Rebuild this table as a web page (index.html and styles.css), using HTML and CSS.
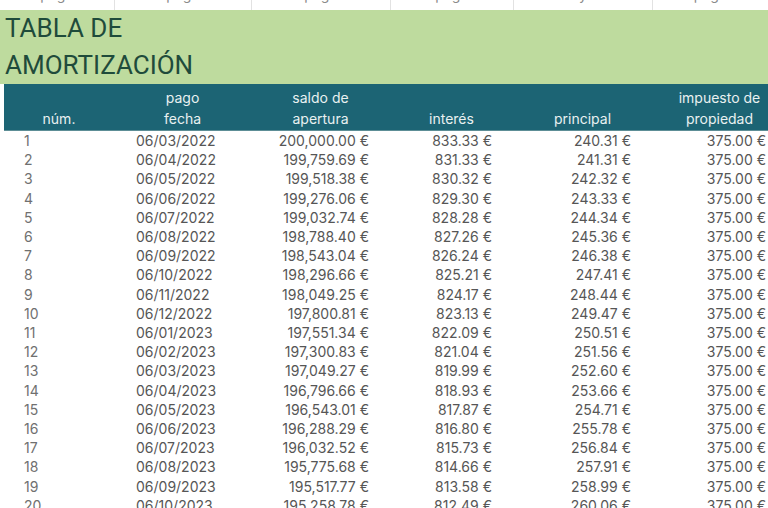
FILE: index.html
```html
<!DOCTYPE html>
<html lang="es">
<head>
<meta charset="utf-8">
<title>Tabla de amortización</title>
<link rel="stylesheet" href="styles.css">
</head>
<body>
<div class="sheet">
  <div class="strip">
    <div class="scell c1"><span>pago</span></div>
    <div class="scell c2"><span>pago</span></div>
    <div class="scell c3"><span>pago</span></div>
    <div class="scell c4"><span>pago</span></div>
    <div class="scell c5"><span>y</span></div>
    <div class="scell c6"><span>pago</span></div>
  </div>
  <div class="title">TABLA DE<br>AMORTIZACIÓN</div>
  <table class="amort">
    <colgroup>
      <col class="w1"><col class="w2"><col class="w3"><col class="w4"><col class="w5"><col class="w6">
    </colgroup>
    <thead>
      <tr>
        <th>núm.</th>
        <th>pago<br>fecha</th>
        <th>saldo de<br>apertura</th>
        <th>interés</th>
        <th>principal</th>
        <th>impuesto de<br>propiedad</th>
      </tr>
    </thead>
    <tbody>
      <tr><td>1</td><td>06/03/2022</td><td>200,000.00 €</td><td>833.33 €</td><td>240.31 €</td><td>375.00 €</td></tr>
      <tr><td>2</td><td>06/04/2022</td><td>199,759.69 €</td><td>831.33 €</td><td>241.31 €</td><td>375.00 €</td></tr>
      <tr><td>3</td><td>06/05/2022</td><td>199,518.38 €</td><td>830.32 €</td><td>242.32 €</td><td>375.00 €</td></tr>
      <tr><td>4</td><td>06/06/2022</td><td>199,276.06 €</td><td>829.30 €</td><td>243.33 €</td><td>375.00 €</td></tr>
      <tr><td>5</td><td>06/07/2022</td><td>199,032.74 €</td><td>828.28 €</td><td>244.34 €</td><td>375.00 €</td></tr>
      <tr><td>6</td><td>06/08/2022</td><td>198,788.40 €</td><td>827.26 €</td><td>245.36 €</td><td>375.00 €</td></tr>
      <tr><td>7</td><td>06/09/2022</td><td>198,543.04 €</td><td>826.24 €</td><td>246.38 €</td><td>375.00 €</td></tr>
      <tr><td>8</td><td>06/10/2022</td><td>198,296.66 €</td><td>825.21 €</td><td>247.41 €</td><td>375.00 €</td></tr>
      <tr><td>9</td><td>06/11/2022</td><td>198,049.25 €</td><td>824.17 €</td><td>248.44 €</td><td>375.00 €</td></tr>
      <tr><td>10</td><td>06/12/2022</td><td>197,800.81 €</td><td>823.13 €</td><td>249.47 €</td><td>375.00 €</td></tr>
      <tr><td>11</td><td>06/01/2023</td><td>197,551.34 €</td><td>822.09 €</td><td>250.51 €</td><td>375.00 €</td></tr>
      <tr><td>12</td><td>06/02/2023</td><td>197,300.83 €</td><td>821.04 €</td><td>251.56 €</td><td>375.00 €</td></tr>
      <tr><td>13</td><td>06/03/2023</td><td>197,049.27 €</td><td>819.99 €</td><td>252.60 €</td><td>375.00 €</td></tr>
      <tr><td>14</td><td>06/04/2023</td><td>196,796.66 €</td><td>818.93 €</td><td>253.66 €</td><td>375.00 €</td></tr>
      <tr><td>15</td><td>06/05/2023</td><td>196,543.01 €</td><td>817.87 €</td><td>254.71 €</td><td>375.00 €</td></tr>
      <tr><td>16</td><td>06/06/2023</td><td>196,288.29 €</td><td>816.80 €</td><td>255.78 €</td><td>375.00 €</td></tr>
      <tr><td>17</td><td>06/07/2023</td><td>196,032.52 €</td><td>815.73 €</td><td>256.84 €</td><td>375.00 €</td></tr>
      <tr><td>18</td><td>06/08/2023</td><td>195,775.68 €</td><td>814.66 €</td><td>257.91 €</td><td>375.00 €</td></tr>
      <tr><td>19</td><td>06/09/2023</td><td>195,517.77 €</td><td>813.58 €</td><td>258.99 €</td><td>375.00 €</td></tr>
      <tr><td>20</td><td>06/10/2023</td><td>195,258.78 €</td><td>812.49 €</td><td>260.06 €</td><td>375.00 €</td></tr>
    </tbody>
  </table>
</div>
</body>
</html>
```
FILE: styles.css
```css
html, body {
  margin: 0;
  padding: 0;
  background: #ffffff;
}
body {
  width: 768px;
  height: 508px;
  overflow: hidden;
  font-family: Inter, "Noto Sans", sans-serif;
}
.sheet {
  width: 768px;
}
.strip {
  display: flex;
  height: 10px;
  overflow: hidden;
  background: #ffffff;
}
.scell {
  flex: none;
  height: 10px;
  border-right: 1px solid #e2e2e2;
  box-sizing: border-box;
  overflow: hidden;
  text-align: center;
  color: #8a8a8a;
  font-size: 14px;
  line-height: 14px;
}
.scell span {
  display: block;
  margin-top: -12px;
}
.c1 { width: 115px; }
.c2 { width: 137px; }
.c3 { width: 139px; }
.c4 { width: 123px; }
.c5 { width: 139px; }
.c6 { width: 115px; border-right: none; }

.title {
  background: #bedb9e;
  color: #1f4b3b;
  font-family: Roboto, Inter, sans-serif;
  font-size: 26px;
  line-height: 37px;
  padding-left: 5px;
  height: 74px;
}
.amort {
  margin-left: 4px;
  border-collapse: collapse;
  table-layout: fixed;
  width: 783px;
}
.w1 { width: 110px; }
.w2 { width: 137px; }
.w3 { width: 139px; }
.w4 { width: 123px; }
.w5 { width: 139px; }
.w6 { width: 135px; }

.amort th {
  background: #1c6474;
  color: #e9f1f1;
  font-weight: 400;
  font-size: 14px;
  line-height: 21px;
  padding: 3px 0 1px;
  text-align: center;
  vertical-align: bottom;
  border-bottom: 1px solid #5d8e96;
}
.amort td {
  font-size: 14px;
  line-height: 19.2px;
  height: 19.2px;
  padding: 0 21px 0 0;
  color: #565656;
  text-align: right;
  white-space: nowrap;
}
.amort td:first-child {
  text-align: left;
  padding: 0 0 0 20px;
  color: #707070;
}
.amort td:nth-child(2) {
  text-align: left;
  padding: 0 0 0 22px;
}
```
